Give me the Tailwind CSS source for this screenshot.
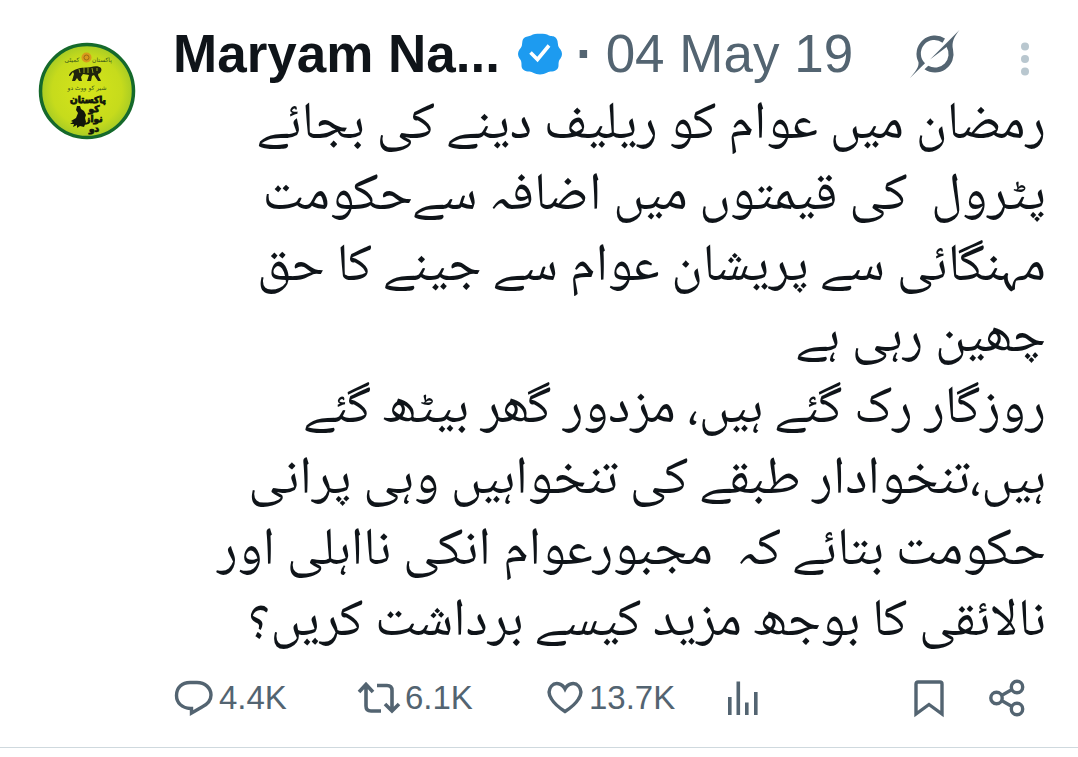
<!DOCTYPE html>
<html lang="en">
<head>
    <meta charset="UTF-8">
    <meta name="viewport" content="width=device-width, initial-scale=1.0">
    <title>Maryam Na... - 04 May 19</title>
    <script src="https://cdn.jsdelivr.net/npm/@tailwindcss/browser@4"></script>
</head>
<body class="bg-white font-['Liberation_Sans',Arial,sans-serif] text-[#0f1419]">
    <article class="flex border-b border-[#cfd9de] pt-6 pr-8 pb-7 pl-[38px]">
        <!-- Avatar -->
        <a href="#" aria-label="Profile" class="mt-[18px] mr-[37px] size-[98px] shrink-0">
            <svg viewBox="0 0 98 98" class="size-full" font-family="DejaVu Sans, sans-serif" text-anchor="middle">
                <defs>
                    <radialGradient id="disc">
                        <stop offset="0" stop-color="#d6e51a"/>
                        <stop offset="0.75" stop-color="#c6db1c"/>
                        <stop offset="1" stop-color="#a6cb25"/>
                    </radialGradient>
                </defs>
                <circle cx="49" cy="49" r="46.500" fill="url(#disc)" stroke="#15692b" stroke-width="3.500"/>
                <text x="34" y="20" font-size="6" fill="#35551a">کمیٹی</text>
                <text x="64" y="20" font-size="6" fill="#35551a">پاکستان</text>
                <circle cx="48.500" cy="15.500" r="5" fill="#d99a1c"/>
                <circle cx="48.500" cy="15.500" r="2.500" fill="none" stroke="#9a6a14"/>
                <path fill="#20250c" d="M39 27c4-2 10-1 14-2 4-1 8-1 10 1 1 2 0 4-1 5l-2 1c0 3 2 4 3 7h-3l-4-6-2 1-1 5h-4l2-6-6-1-2 3 1 4h-3l-2-3-2 3h-3l2-7-1-2c-2 2-2 4-4 4 0-2 2-5 8-7z"/>
                <path stroke="#c6db1c" stroke-width="0.700" fill="none" d="M41 27l1 4m4-5l0 5m4-5l0 5m4-5l1 5m4-5l0 3"/>
                <text x="49" y="48" font-size="6" fill="#35551a">شیر کو ووٹ دو</text>
                <g fill="#12160a" stroke="#12160a" stroke-width="0.800" font-weight="bold">
                    <text x="50" y="61" font-size="9">پاکستان</text>
                    <text x="56" y="70" font-size="9">کو</text>
                    <text x="56" y="80" font-size="9">نواز</text>
                    <text x="56" y="90" font-size="9">دو</text>
                </g>
                <path fill="#12160a" d="M39 64l3 0 1 3 3 2 2 4-1 3 1 4-2 5-4-1-3 2 0-3-4 2 1-3-4 0 3-2-2-1 5-3 2-5-2-3z"/>
            </svg>
        </a>

        <div class="min-w-0 flex-1">
            <!-- Author and date -->
            <header class="flex items-center text-[53px] leading-[60px]">
                <a href="#" class="font-bold whitespace-nowrap">Maryam Na...</a>
                <svg viewBox="0 0 44 42" class="ml-[18px] h-[42px] w-11 shrink-0" role="img" aria-label="Verified account">
                    <path fill="#1d9bf0" d="M13 2.500C15.500.8 18 .8 22 .8s6.500 0 9 1.700c2 1 5 0 7 2.500s1.500 4 2 6.500c0 2 1 3 2.500 5 2 3 2 6 0 9-2 2-2 4-2 7 0 4-3.500 6-8 6-3 0-5 3-10.500 3s-7.500-3-10.500-3c-4.500 0-8-2-8-6 0-3 0-5-2-7-2-3-2-6 0-9 1.500-2 2.500-3 2.500-5C4.500 9 4 7 6 5s5-1.500 7-2.500z"/>
                    <path fill="none" stroke="#fff" stroke-width="3.600" d="M12.500 19.500l7 7L31 12.500"/>
                </svg>
                <span class="ml-3.5 font-bold text-[#536471]">·</span>
                <time datetime="2019-05-04" class="ml-3 whitespace-nowrap text-[#536471]">04 May 19</time>
                <button type="button" aria-label="Grok actions" class="ml-auto shrink-0">
                    <svg viewBox="0 0 50 48" class="h-12 w-[50px] text-[#536471]" fill="currentColor">
                        <path d="M35 8.400A18.500 18.500 0 0 0 8.500 32.300C9 37 6 41 0 48L15 33.200A13.500 13.500 0 0 1 32.500 12.700z"/>
                        <path d="M49.500 0L20 29.500 36.600 17A13.500 13.500 0 0 1 18.300 35.700L14.500 39.200A18.500 18.500 0 0 0 43 19.500C41.500 12 44 7 49.500 0z"/>
                    </svg>
                </button>
                <button type="button" aria-label="More" class="mt-2.5 mr-4 ml-[60px] shrink-0">
                    <svg viewBox="0 0 10 34" class="h-[34px] w-2.5" fill="#b9c7cf">
                        <circle cx="5" cy="4.500" r="4"/>
                        <circle cx="5" cy="17" r="4"/>
                        <circle cx="5" cy="29.500" r="4"/>
                    </svg>
                </button>
            </header>

            <!-- Post text -->
            <p dir="rtl" lang="ur" class="mt-[5px] font-['Noto_Naskh_Arabic_UI','Noto_Naskh_Arabic','Noto_Sans_Arabic','DejaVu_Sans',sans-serif] text-[53px] leading-[71px] whitespace-pre">رمضان میں عوام کو ریلیف دینے کی بجائے
پٹرول  کی قیمتوں میں اضافہ سےحکومت
مہنگائی سے پریشان عوام سے جینے کا حق
چھین رہی ہے
روزگار رک گئے ہیں، مزدور گھر بیٹھ گئے
ہیں،تنخوادار طبقے کی تنخواہیں وہی پرانی
حکومت بتائے کہ  مجبورعوام انکی نااہلی اور
نالائقی کا بوجھ مزید کیسے برداشت کریں؟</p>

            <!-- Actions -->
            <footer class="mt-5 flex items-center text-[33px] leading-[42px] text-[#536471]">
                <button type="button" aria-label="Reply" class="flex w-[184px] items-center gap-1.5">
                    <svg viewBox="0 0 40 40" class="size-10" fill="none" stroke="currentColor" stroke-width="3.400">
                        <path d="M17.500 30.500C9 30 3.500 25 3.500 17.500 3.500 9.500 9 4.500 17 4.500H24c8 0 14 5.500 14 12.500 0 6-4 9.500-9 12L18.500 35V30.500z"/>
                    </svg>
                    4.4K
                </button>
                <button type="button" aria-label="Repost" class="flex w-[188px] items-center gap-1">
                    <svg viewBox="0 0 44 40" class="h-10 w-11" fill="none" stroke="currentColor" stroke-width="3.600">
                        <path d="M2 14l7-7.500L16 14M9 7v21q0 5 5 5h10M20 7.500h10q5 0 5 5V33M28 26l7 7 7-7"/>
                    </svg>
                    6.1K
                </button>
                <button type="button" aria-label="Like" class="flex w-[182px] items-center gap-1">
                    <svg viewBox="0 0 40 40" class="size-10" fill="none" stroke="currentColor" stroke-width="3.400">
                        <path d="M20 11C17 5 10 4 6.500 8c-3 3.500-3 8.500 0 13 3 5 8 9 13.500 12.500 5.500-3.500 10.500-7.500 13.500-12.500 3-4.500 3-9.500 0-13C30 4 23 5 20 11z"/>
                    </svg>
                    13.7K
                </button>
                <button type="button" aria-label="Views">
                    <svg viewBox="0 0 32 40" class="h-10 w-8" fill="currentColor">
                        <path d="M1 19h3.600v18H1zM9.500 3.500h3.600V37H9.500zM18 24.500h3.600V37H18zM27 14h3.600v23H27z"/>
                    </svg>
                </button>
                <button type="button" aria-label="Bookmark" class="ml-auto">
                    <svg viewBox="0 0 32 40" class="h-10 w-8" fill="none" stroke="currentColor" stroke-width="3.400">
                        <path d="M3 36V6q0-2 2-2H27q2 0 2 2V36L16 26.500z"/>
                    </svg>
                </button>
                <button type="button" aria-label="Share" class="mr-5 ml-[43px]">
                    <svg viewBox="0 0 38 40" class="h-10 w-[38px]" fill="none" stroke="currentColor" stroke-width="3.400">
                        <circle cx="8.500" cy="20" r="5.700"/>
                        <circle cx="29" cy="9" r="5.700"/>
                        <circle cx="29" cy="31" r="5.700"/>
                        <path d="M13.500 17.500L24 11.500M13.500 22.500L24 28.500"/>
                    </svg>
                </button>
            </footer>
        </div>
    </article>
</body>
</html>
